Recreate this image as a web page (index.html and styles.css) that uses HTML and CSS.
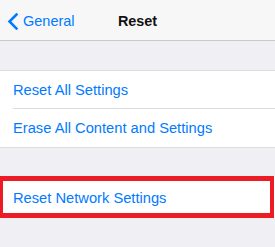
FILE: index.html
```html
<!DOCTYPE html>
<html lang="en">
<head>
    <meta charset="UTF-8">
    <meta name="viewport" content="width=device-width, initial-scale=1.0">
    <title>Reset</title>
    <link rel="stylesheet" href="styles.css">
</head>
<body>
   <nav class="navbar">
    <a class="back" href="#">
        <svg class="chevron" width="11" height="17" viewBox="0 0 11 17">
            <path d="M9.5 1.5 L2.5 8.5 L9.5 15.5" fill="none" stroke="#007aff" stroke-width="2.6" stroke-linecap="square"/>
        </svg>
        <span>General</span>
    </a>
    <h1 class="title">Reset</h1>
    <div></div>
   </nav>
   <div class="group first">
      <div class="row">Reset All Settings</div>
      <div class="row">Erase All Content and Settings</div>
   </div>
   <div class="group second">
      <div class="row marked">Reset Network Settings</div>
   </div>
</body>
</html>
```

FILE: styles.css
```css
* {
  box-sizing: border-box;
}
body {
  margin: 0;
  background-color: #efeff4;
  font-family: "Liberation Sans", Arial, sans-serif;
  font-size: 14.7px;
}
.navbar {
  display: grid;
  grid-template-columns: 1fr auto 1fr;
  align-items: center;
  height: 41px;
  background-color: #f7f7f8;
  border-bottom: 1px solid #c8c7cc;
}
.back {
  display: flex;
  align-items: center;
  gap: 5px;
  padding-left: 7px;
  color: #007aff;
  text-decoration: none;
  font-size: 14.5px;
  padding-top: 2px;
}
.chevron {
  display: block;
}
.title {
  margin: 0;
  font-size: 14.4px;
  font-weight: bold;
  color: #111;
  padding-top: 1px;
}
.group {
  background-color: #fff;
}
.first {
  margin-top: 29px;
  border-top: 1px solid #dcdce0;
  border-bottom: 1px solid #dcdce0;
}
.second {
  margin-top: 28px;
}
.row {
  display: flex;
  align-items: center;
  height: 38px;
  margin-left: 13px;
  color: #007aff;
}
.first .row:first-child {
  border-bottom: 1px solid #dcdce0;
}
.marked {
  margin-left: 0;
  height: 42px;
  padding-left: 10px;
  padding-top: 1px;
  border: 5px solid #ed1c24;
  border-left-width: 3px;
  border-right-width: 4px;
  margin-right: 1px;
}
```
